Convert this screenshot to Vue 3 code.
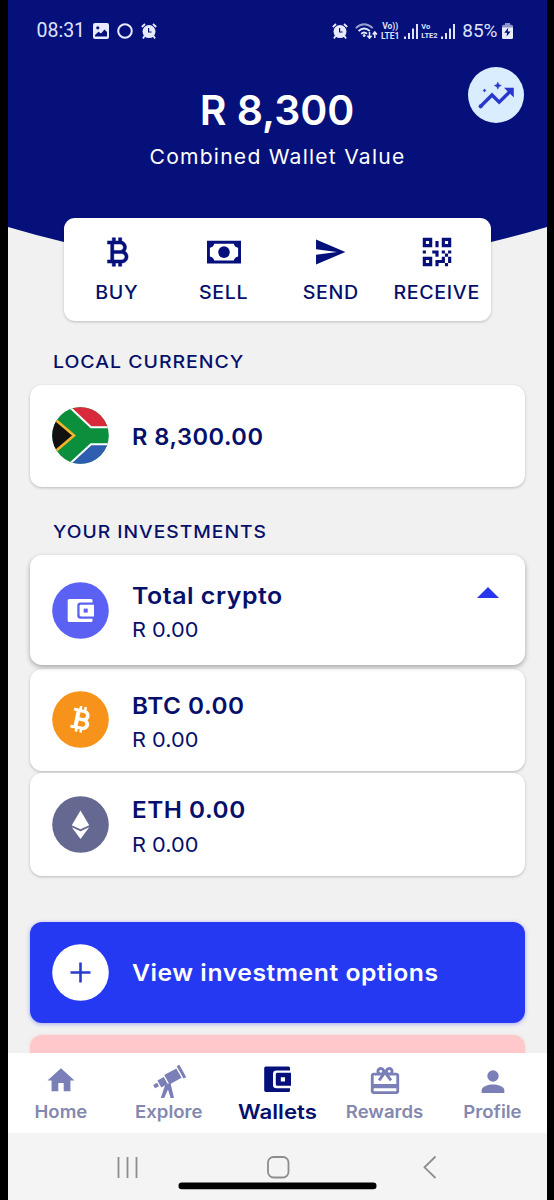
<script setup>
const actions = [
  { id: 'buy', label: 'BUY' },
  { id: 'sell', label: 'SELL' },
  { id: 'send', label: 'SEND' },
  { id: 'receive', label: 'RECEIVE' },
]
const tabs = [
  { id: 'home', label: 'Home' },
  { id: 'explore', label: 'Explore' },
  { id: 'wallets', label: 'Wallets' },
  { id: 'rewards', label: 'Rewards' },
  { id: 'profile', label: 'Profile' },
]
</script>

<template>
  <div class="frame">
    <div class="phone">
      <header class="hero">
        <svg class="hero-shape" viewBox="0 0 539 300" width="539" height="300" preserveAspectRatio="none">
          <path d="M0 0H539V227Q512 235 483 242L270 290L56 242Q27 235 0 227Z" fill="#06107a" />
        </svg>
        <div class="status">
          <div class="status-left">
            <span class="clock">08:31</span>
            <svg class="s-img" width="16" height="16" viewBox="0 0 16 16">
              <path fill-rule="evenodd" d="M2 0H14Q16 0 16 2V14Q16 16 14 16H2Q0 16 0 14V2Q0 0 2 0ZM2 12V13.5H14V9L11.5 6.5L8 10.5L5.5 8.8ZM4.8 3.2A1.6 1.6 0 1 0 4.8 6.4A1.6 1.6 0 1 0 4.8 3.2Z" fill="#e8eaff" />
            </svg>
            <svg class="s-ring" width="16" height="16" viewBox="0 0 16 16"><circle cx="8" cy="8" r="6.8" fill="none" stroke="#e8eaff" stroke-width="2" /></svg>
            <svg class="s-alarm" width="16" height="16" viewBox="0 0 16 16">
              <circle cx="8" cy="8.6" r="6.5" fill="#e8eaff" />
              <path d="M.8 4L4 1M15.2 4L12 1M3.5 13L2 15.5M12.5 13L14 15.5" stroke="#e8eaff" stroke-width="1.8" />
              <path d="M7.6 5V9H10.6" stroke="#06107a" stroke-width="1.2" fill="none" />
            </svg>
          </div>
          <div class="status-right">
            <svg width="16" height="16" viewBox="0 0 16 16">
              <circle cx="8" cy="8.6" r="6.5" fill="#e8eaff" />
              <path d="M.8 4L4 1M15.2 4L12 1M3.5 13L2 15.5M12.5 13L14 15.5" stroke="#e8eaff" stroke-width="1.8" />
              <path d="M7.6 5V9H10.6" stroke="#06107a" stroke-width="1.2" fill="none" />
            </svg>
            <svg class="s-wifi" width="23" height="17" viewBox="0 0 23 17" fill="none" stroke="#e8eaff">
              <path d="M.8 5.2Q9 -2.6 17.8 5.2" stroke-width="1.8" opacity=".65" />
              <path d="M3.6 8Q9 3 14.8 8" stroke-width="1.8" />
              <path d="M6.2 10.8Q9 8.2 12 10.8" stroke-width="1.8" />
              <circle cx="9.2" cy="12.6" r="1" fill="#e8eaff" />
              <path d="M14.5 9V15M12.4 12.8L14.5 15.2L16.6 12.8M19.8 15V9.6M17.7 11.4L19.8 9L21.9 11.4" stroke-width="1.5" />
            </svg>
            <span class="lte"><i>Vo))</i><i>LTE1</i></span>
            <svg class="s-sig" width="14" height="15" viewBox="0 0 14 15"><path d="M0 12.5H2V15H0ZM4 9H6V15H4ZM8 4.5H10V15H8ZM12 0H14V15H12Z" fill="#dfe2fa" /></svg>
            <span class="lte lte2"><i>Vo</i><i>LTE2</i></span>
            <svg class="s-sig2" width="14" height="15" viewBox="0 0 14 15"><path d="M0 12.5H2V15H0ZM4 9H6V15H4ZM8 4.5H10V15H8ZM12 0H14V15H12Z" fill="#dfe2fa" /></svg>
            <span class="clock pct">85%</span>
            <svg class="s-bat" width="11" height="16" viewBox="0 0 11 16">
              <path d="M3 0H8V2H3Z" fill="#8f95cc" />
              <path d="M1.5 1.8H9.5Q11 1.8 11 3.3V5H0V3.3Q0 1.8 1.5 1.8Z" fill="#8f95cc" />
              <path d="M0 4.5H11V14.5Q11 16 9.5 16H1.5Q0 16 0 14.5Z" fill="#e8eaff" />
              <path d="M6.2 4.8L2.3 9.8H5L4.6 13.5L8.6 8.5H5.8Z" fill="#06107a" />
            </svg>
          </div>
        </div>
        <div class="amount">R 8,300</div>
        <div class="caption">Combined Wallet Value</div>
        <div class="trend">
          <svg width="56" height="56" viewBox="0 0 56 56">
            <path d="M12.5 39.5L24 28L31.2 35.2L43.5 23" fill="none" stroke="#2a37cc" stroke-width="3.4" />
            <circle cx="12.7" cy="39.3" r="2.1" fill="#2a37cc" />
            <path d="M36 20.8H45.8V30.5Z" fill="#2a37cc" />
            <path d="M29.8 15L30.9 17.5L33.4 18.6L30.9 19.7L29.8 22.2L28.7 19.7L26.2 18.6L28.7 17.5ZM16.5 21.8L17.1 22.9L18.2 23.5L17.1 24.1L16.5 25.2L15.9 24.1L14.8 23.5L15.9 22.9Z" fill="#2a37cc" stroke="#2a37cc" stroke-width=".4" />
          </svg>
        </div>
      </header>

      <section class="actions">
        <button v-for="a in actions" :key="a.id" class="action">
          <svg v-if="a.id === 'buy'" width="38" height="38" viewBox="0 0 24 24" stroke="#06107a" stroke-width=".3">
            <path d="M17.06 11.57C17.65 10.88 18 9.98 18 9c0-1.86-1.27-3.43-3-3.87V3h-2v2h-2V3H9v2H6v2h2v10H6v2h3v2h2v-2h2v2h2v-2c2.21 0 4-1.79 4-4C19 13.55 18.22 12.27 17.06 11.57zM10 7h4c1.1 0 2 .9 2 2s-.9 2-2 2h-4V7zM15 17h-5v-4h5c1.1 0 2 .9 2 2S16.1 17 15 17z" />
          </svg>
          <svg v-else-if="a.id === 'sell'" width="38" height="38" viewBox="0 0 38 38">
            <path fill-rule="evenodd" d="M2 7.7H36V30.5H2ZM9.2 10.7Q8.5 14 4.9 14.8V23.4Q8.5 24.2 9.2 27.5H28.8Q29.5 24.2 33.1 23.4V14.8Q29.5 14 28.8 10.7Z" />
            <circle cx="19" cy="19.1" r="5.8" />
          </svg>
          <svg v-else-if="a.id === 'send'" width="38" height="38" viewBox="-1.6 -1.6 27.2 27.2">
            <path d="M2 21L23 12L2 3V10L17 12L2 14V21Z" />
          </svg>
          <svg v-else width="38" height="38" viewBox="0 0 24 24">
            <path d="M3,11H5V13H3V11M11,5H13V9H11V5M9,11H13V15H11V13H9V11M15,11H17V13H19V11H21V13H19V15H21V19H19V21H17V19H13V21H11V17H15V15H17V13H15V11M19,19V15H17V19H19M15,3H21V9H15V3M17,5V7H19V5H17M3,3H9V9H3V3M5,5V7H7V5H5M3,15H9V21H3V15M5,17V19H7V17H5Z" />
          </svg>
          <span>{{ a.label }}</span>
        </button>
      </section>

      <main class="content">
        <h2 class="h-local">LOCAL CURRENCY</h2>
        <article class="card local">
          <svg class="badge" width="57" height="57" viewBox="0 0 57 57">
            <defs><clipPath id="disc"><circle cx="28.5" cy="28.5" r="28.3" /></clipPath></defs>
            <g clip-path="url(#disc)">
              <rect width="57" height="57" fill="#0b8f3c" />
              <path d="M18 -1H57V19.5H39Z" fill="#d82a3a" />
              <path d="M18 58H57V38H39Z" fill="#2f5db0" />
              <path d="M17 -.5L39 20.3H58M17 57.5L39 37.2H58" fill="none" stroke="#fff" stroke-width="2" />
              <path d="M-2 8L22 28.5L-2 49Z" fill="#111" stroke="#f3b32b" stroke-width="2.6" />
            </g>
          </svg>
          <div class="title t-local">R 8,300.00</div>
        </article>

        <h2 class="h-inv">YOUR INVESTMENTS</h2>
        <article class="card total">
          <svg class="badge" width="57" height="57" viewBox="0 0 57 57">
            <circle cx="28.5" cy="28.5" r="28.3" fill="#5b62f3" />
            <path d="M17.2 17H39Q40.5 17 40.5 18.5V20.4H28.3Q25.3 20.4 25.3 23.4V33.8Q25.3 36.8 28.3 36.8H40.5V38.500Q40.500 40 39 40H17.200Q15.700 40 15.700 38.500V18.500Q15.700 17 17.200 17Z" fill="#fff" />
            <path d="M29 22.800H42V34.400H29Q27.600 34.400 27.600 33V24.200Q27.600 22.800 29 22.800Z" fill="#fff" />
            <rect x="31.700" y="26.600" width="4" height="4" fill="#5b62f3" />
          </svg>
          <div class="lines">
            <div class="title t-total">Total crypto</div>
            <div class="sub">R 0.00</div>
          </div>
          <svg class="caret" width="22" height="11" viewBox="0 0 22 11"><path d="M0 11L11 0L22 11Z" fill="#2836ee" /></svg>
        </article>
        <article class="card btc">
          <svg class="badge" width="57" height="57" viewBox="0 0 57 57">
            <circle cx="28.5" cy="28.5" r="28.3" fill="#f7931a" />
            <g transform="translate(28.5 28.3) rotate(12) scale(1.45) translate(-12.3 -12)" fill="#fff">
              <path fill-rule="evenodd" d="M17.06 11.57C17.65 10.88 18 9.98 18 9c0-1.86-1.27-3.43-3-3.87V3h-1.7v2h-1.5V3H10v2H6.5v2h2v10H6.5v2H10v2h1.8v-2h1.5v2H15v-2c2.21 0 4-1.79 4-4C19 13.55 18.22 12.27 17.06 11.57zM11.3 7.3h2.5c1 0 1.7.7 1.7 1.7s-.7 1.8-1.7 1.8h-2.5zM14.5 16.7h-3.2v-3.6h3.2c1.1 0 1.8.8 1.8 1.8s-.7 1.8-1.8 1.8z" />
            </g>
          </svg>
          <div class="lines">
            <div class="title t-coin">BTC 0.00</div>
            <div class="sub">R 0.00</div>
          </div>
        </article>
        <article class="card eth">
          <svg class="badge" width="57" height="57" viewBox="0 0 57 57">
            <circle cx="28.5" cy="28.5" r="28.3" fill="#656891" />
            <path d="M28.5 14.5L37.2 29.2L28.5 33.3L19.8 29.2ZM19.8 31.2L28.5 35.2L37.2 31.2L28.5 43Z" fill="#fff" />
          </svg>
          <div class="lines">
            <div class="title t-coin">ETH 0.00</div>
            <div class="sub">R 0.00</div>
          </div>
        </article>

        <button class="card cta">
          <svg class="badge" width="57" height="57" viewBox="0 0 57 57">
            <circle cx="28.5" cy="28.5" r="28.3" fill="#fff" />
            <path d="M18.5 28.5H38.5M28.5 18.5V38.5" stroke="#2b3bd0" stroke-width="2.6" />
          </svg>
          <span class="title t-cta">View investment options</span>
        </button>
        <div class="notice"></div>
      </main>

      <nav class="tabs">
        <a v-for="t in tabs" :key="t.id" class="tab" :class="{ active: t.id === 'wallets' }">
          <svg v-if="t.id === 'home'" width="34" height="34" viewBox="-.6 -.9 25.2 25.2">
            <path d="M10 20V14H14V20H19V12H22L12 3L2 12H5V20H10Z" />
          </svg>
          <svg v-else-if="t.id === 'explore'" width="34" height="36" viewBox="0 0 34 36">
            <g transform="translate(17.4 15.2) rotate(-29)">
              <path d="M-17.5 -1.9H-13V1.9H-17.5ZM-11.6 -3.7H-4.4V4.2H-11.6ZM-3 -5.2H10.8V5.6H-3ZM12.2 -7H15.2V7.2H12.2Z" />
            </g>
            <path d="M13 22.3L15.6 20.6H18.6L22 35H18.6L16 26.4L12.200 35H8.800Z" />
          </svg>
          <svg v-else-if="t.id === 'wallets'" width="34" height="34" viewBox="0 0 34 34">
            <path d="M5.9 3.4H28.5Q30 3.4 30 4.900V7.400H16.500Q13 7.400 13 10.800V22Q13 25.300 16.500 25.300H30V27.500Q30 29 28.500 29H5.900Q4.200 29 4.200 27.300V5.100Q4.200 3.400 5.900 3.400Z" />
            <path fill-rule="evenodd" d="M17.3 9.8H31V22.800H17.300Q15.800 22.800 15.800 21.300V11.300Q15.800 9.800 17.300 9.800ZM20.800 14.200V18.400H25V14.200Z" />
          </svg>
          <svg v-else-if="t.id === 'rewards'" width="34" height="34" viewBox="0 0 24 24">
            <path d="M20 6h-2.18c.11-.31.18-.65.18-1 0-1.66-1.34-3-3-3-1.05 0-1.96.54-2.5 1.35l-.5.67-.5-.68C10.96 2.54 10.05 2 9 2 7.34 2 6 3.34 6 5c0 .35.07.69.18 1H4c-1.11 0-1.99.89-1.99 2L2 19c0 1.11.89 2 2 2h16c1.11 0 2-.89 2-2V8c0-1.11-.89-2-2-2zm-5-2c.55 0 1 .45 1 1s-.45 1-1 1-1-.45-1-1 .45-1 1-1zM9 4c.55 0 1 .45 1 1s-.45 1-1 1-1-.45-1-1 .45-1 1-1zm11 15H4v-2h16v2zm0-5H4V8h5.08L7 10.83 8.62 12 12 7.4l3.38 4.6L17 10.83 14.92 8H20v6z" transform="translate(0 .9)" />
          </svg>
          <svg v-else width="34" height="34" viewBox="0 -1.2 24 24">
            <circle cx="12" cy="8" r="4" />
            <path d="M12 14C16.42 14 20 15.79 20 18V20H4V18C4 15.79 7.58 14 12 14Z" />
          </svg>
          <span>{{ t.label }}</span>
        </a>
      </nav>

      <footer class="system">
        <svg width="539" height="67" viewBox="0 0 539 67" fill="none" stroke="#8d8d8d" stroke-width="1.8">
          <path d="M110.5 24V45M119.5 24V45M128.5 24V45" />
          <rect x="260" y="24" width="20.5" height="20.5" rx="5.5" />
          <path d="M427.5 23.5L416.5 34.3L427.5 45" />
          <rect x="170.5" y="49.5" width="198" height="6.7" rx="3.3" fill="#000" stroke="none" />
        </svg>
      </footer>
    </div>
  </div>
</template>

<style>
body {
  margin: 0;
  background: #000;
}
</style>

<style scoped>
.frame {
  width: 554px;
  height: 1200px;
  overflow: hidden;
  background: #000;
  padding-left: 7.5px;
  box-sizing: border-box;
  font-family: Inter, "Liberation Sans", sans-serif;
  color: #06106b;
}
.phone {
  width: 539px;
  height: 1200px;
  background: #f1f1f1;
  display: flex;
  flex-direction: column;
}
button {
  border: 0;
  background: none;
  padding: 0;
  font: inherit;
  color: inherit;
}
svg {
  display: block;
  flex: none;
}
.hero {
  position: relative;
  height: 217.5px;
  flex: none;
  text-align: center;
  color: #fff;
}
.hero-shape {
  position: absolute;
  left: 0;
  top: 0;
}
.status {
  position: relative;
  display: flex;
  justify-content: space-between;
  height: 62px;
  padding: 0 34px 0 29px;
}
.status-left,
.status-right {
  display: flex;
  align-items: center;
}
.clock {
  font: 400 19.5px/62px Roboto, sans-serif;
  color: #dfe2fa;
}
.s-img { margin-left: 8px; }
.s-ring { margin-left: 7.5px; }
.s-alarm { margin-left: 8px; }
.s-wifi { margin-left: 7px; }
.lte {
  display: flex;
  flex-direction: column;
  width: 20px;
  margin-left: 2px;
  font: 700 8.5px/10px Roboto, sans-serif;
  color: #dfe2fa;
}
.lte i { font-style: normal; }
.lte2 {
  width: 17px;
  margin-left: 3px;
  font-size: 7.5px;
  line-height: 9px;
  text-align: left;
}
.s-sig { margin-left: 4px; }
.s-sig2 { margin-left: 3px; }
.pct {
  margin-left: 7px;
  font-size: 19px;
}
.s-bat { margin-left: 4px; }
.amount {
  position: relative;
  margin-top: 23.5px;
  font-size: 41px;
  line-height: 48px;
  font-weight: 600;
}
.caption {
  position: relative;
  margin-top: 9.5px;
  font-size: 20.5px;
  line-height: 28px;
  letter-spacing: 1.2px;
  transform: scaleX(1.028);
}
.trend {
  position: absolute;
  left: 460.5px;
  top: 66.5px;
  width: 56px;
  height: 56px;
  border-radius: 50%;
  background: #d9edff;
}
.actions {
  position: relative;
  flex: none;
  width: 427px;
  height: 103.5px;
  margin-left: 56px;
  border-radius: 11px;
  background: #fff;
  box-shadow: 0 1px 3px rgba(0, 0, 0, 0.22);
  display: grid;
  grid-template-columns: repeat(4, 1fr);
}
.action {
  display: flex;
  flex-direction: column;
  align-items: center;
  padding-top: 15px;
  font-size: 18px;
  font-weight: 500;
  line-height: 24px;
  letter-spacing: 0.6px;
}
.action svg { fill: #06107a; }
.action span {
  margin-top: 10px;
  transform: scaleX(1.09);
}
.content {
  height: 732px;
  flex: none;
  overflow: hidden;
  padding: 0 22px;
}
h2 {
  margin: 0 0 0 23.5px;
  font-size: 17.5px;
  font-weight: 500;
  line-height: 24px;
  letter-spacing: 0.9px;
  transform: scaleX(1.112);
  transform-origin: 0 0;
}
.h-local { padding-top: 29px; }
.h-inv {
  padding-top: 33px;
  transform: scaleX(1.1);
}
.card {
  box-sizing: border-box;
  width: 495px;
  border-radius: 12px;
  background: #fff;
  box-shadow: 0 1px 3px rgba(0, 0, 0, 0.24);
  display: flex;
  align-items: center;
  padding-left: 22px;
}
.badge { margin-right: 23px; }
.local {
  height: 101.5px;
  margin-top: 11px;
}
.total {
  position: relative;
  height: 110px;
  margin-top: 11.5px;
  box-shadow: 0 2px 5px rgba(0, 0, 0, 0.32);
}
.btc {
  height: 101.5px;
  margin-top: 4px;
}
.eth {
  height: 102.5px;
  margin-top: 2.5px;
}
.cta {
  height: 101px;
  margin-top: 46px;
  background: #2538f2;
  color: #fff;
  box-shadow: 0 1px 4px rgba(37, 56, 242, 0.4);
}
.notice {
  height: 40px;
  width: 495px;
  margin-top: 12px;
  border-radius: 12px;
  background: #ffc9cb;
  box-shadow: 0 0 3px rgba(255, 180, 180, 0.5);
}
.lines { padding-top: 5px; }
.title {
  font-size: 23.5px;
  line-height: 30px;
  font-weight: 600;
  letter-spacing: 0.5px;
  transform-origin: 0 50%;
}
.t-local {
  margin-top: 2px;
  transform: scaleX(1.005);
}
.t-total { transform: scaleX(1.06); }
.t-coin { transform: scaleX(1.035); }
.t-cta {
  margin-top: 2px;
  transform: scaleX(1.053);
}
.sub {
  margin-top: 5.5px;
  font-size: 20.5px;
  line-height: 28px;
  transform: scaleX(1.06);
  transform-origin: 0 50%;
}
.caret {
  margin-left: auto;
  margin-right: 26px;
  margin-bottom: 36px;
}
.tabs {
  flex: none;
  height: 80px;
  background: #fff;
  display: grid;
  grid-template-columns: repeat(5, 1fr);
}
.tab {
  display: flex;
  flex-direction: column;
  align-items: center;
  padding-top: 10px;
  color: #8488ae;
  font-size: 17.5px;
  line-height: 24px;
  font-weight: 600;
}
.tab svg {
  fill: #7a7fb8;
  margin-bottom: auto;
}
.tab span {
  margin-bottom: 9.5px;
  transform: scaleX(1.06);
}
.tab.active {
  color: #06106b;
  font-size: 20px;
}
.tab.active svg { fill: #06107a; }
.tab.active span {
  margin-bottom: 9.5px;
  transform: scaleX(1.11);
}
.system {
  flex: none;
  height: 67px;
  background: #f4f4f4;
}
</style>
